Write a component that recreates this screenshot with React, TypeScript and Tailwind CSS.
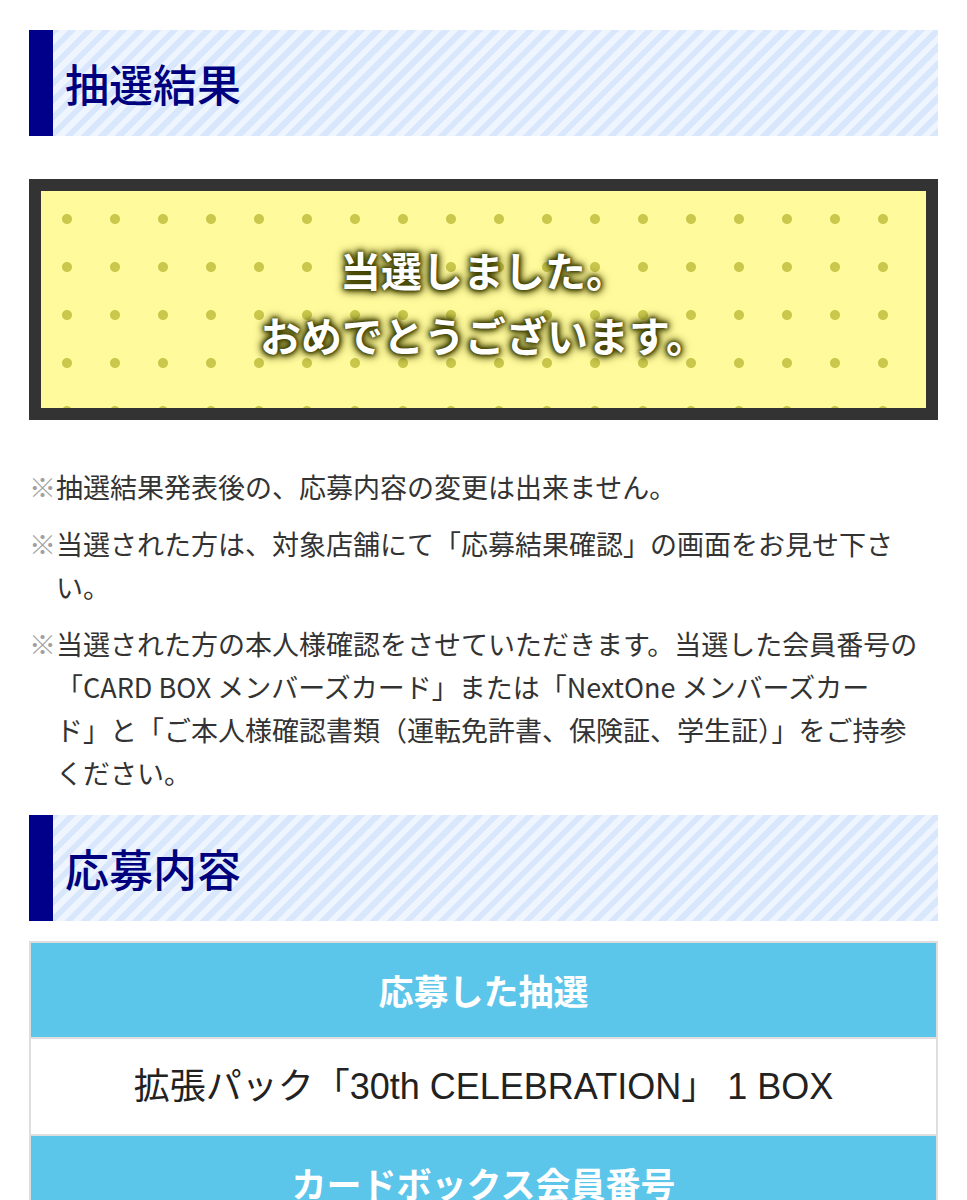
import React from "react";

const cjk = { fontFamily: '"Noto Sans CJK JP", "Noto Sans", sans-serif' };
const mixed = { fontFamily: '"Liberation Sans", "Noto Sans CJK JP", "Noto Sans", sans-serif' };

function SectionTitle({ children }: { children: React.ReactNode }) {
  return (
    <h2 className="flex h-[106px] items-stretch bg-[repeating-linear-gradient(-45deg,#d8e7fb_0px,#d8e7fb_6px,#eef5fe_6px,#eef5fe_12px)]">
      <span className="w-[24px] shrink-0 bg-[#00008a]" />
      <span className="flex items-center pl-[12px] text-[44px] font-medium leading-none text-[#00007f]">
        {children}
      </span>
    </h2>
  );
}

function Note({ children }: { children: React.ReactNode }) {
  return (
    <p className="pl-[27px] indent-[-27px] text-[27px] leading-[43px] text-[#333]">
      <span className="text-[#a0a0a0]">※</span>
      {children}
    </p>
  );
}

export default function App() {
  return (
    <div className="min-h-[1200px] bg-white px-[29px] pt-[30px]" style={cjk}>
      <SectionTitle>抽選結果</SectionTitle>

      <div className="mt-[43px] h-[241px] border-[12px] border-[#333] bg-[#fffa9c]">
        <div className="flex h-full flex-col items-center justify-center bg-[radial-gradient(circle,#c9c84c_4.5px,transparent_5.5px)] bg-[length:48px_48px] bg-[position:2px_4px] pt-[4px] text-center text-[41px] font-bold leading-[65px] text-white [text-shadow:0_0_3px_#3f3f00,0_0_5px_#3f3f00,0_0_7px_#454500,0_0_9px_#4f4f08,0_0_12px_#5a5a10]">
          <span>当選しました。</span>
          <span>おめでとうございます。</span>
        </div>
      </div>

      <div className="mt-[45px] flex flex-col gap-[14px]">
        <Note>抽選結果発表後の、応募内容の変更は出来ません。</Note>
        <Note>当選された方は、対象店舗にて「応募結果確認」の画面をお見せ下さい。</Note>
        <Note>
          当選された方の本人様確認をさせていただきます。当選した会員番号の「CARD BOX メンバーズカード」または「NextOne メンバーズカー
          <br />
          ド」と「ご本人様確認書類（運転免許書、保険証、学生証）」をご持参
          <br />
          ください。
        </Note>
      </div>

      <div className="mt-[21px]">
        <SectionTitle>応募内容</SectionTitle>
      </div>

      <div className="mt-[20px] border-2 border-[#dedede]">
        <div className="flex h-[96px] items-center justify-center border-b-2 border-[#dedede] bg-[#5bc5ea] text-[35px] font-bold text-white">
          応募した抽選
        </div>
        <div className="flex h-[97px] items-center justify-center border-b-2 border-[#dedede] bg-white text-[36px] leading-none text-[#222]" style={mixed}>
          拡張パック「30th CELEBRATION」 1 BOX
        </div>
        <div className="flex h-[96px] items-center justify-center border-b-2 border-[#dedede] bg-[#5bc5ea] text-[35px] font-bold text-white">
          カードボックス会員番号
        </div>
        <div className="flex h-[97px] items-center justify-center bg-white text-[35px] text-[#222]">
          &nbsp;
        </div>
      </div>
    </div>
  );
}
